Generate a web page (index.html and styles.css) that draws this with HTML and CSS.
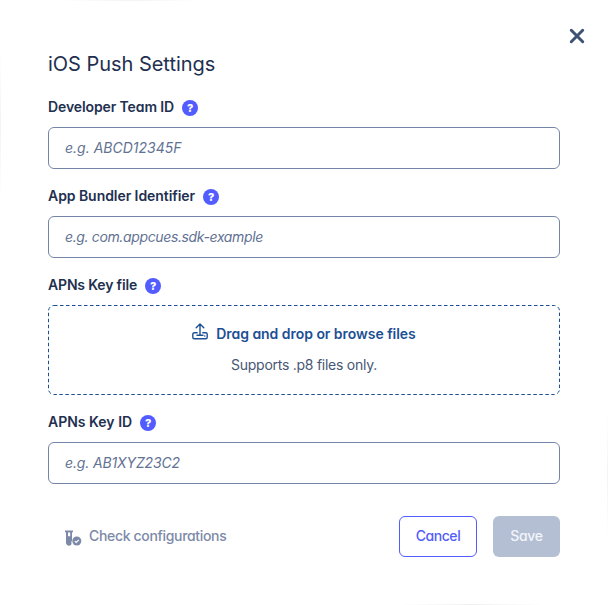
FILE: index.html
```
<!DOCTYPE html>
<html lang="en">
<head>
<meta charset="utf-8">
<title>iOS Push Settings</title>
<link rel="stylesheet" href="styles.css">
</head>
<body>
<main class="modal">
  <button class="close" aria-label="Close"><svg width="16" height="16" viewBox="0 0 16 16"><path d="M2.3 2.3 13.7 13.7M13.7 2.3 2.3 13.7" fill="none" stroke="#405274" stroke-width="3" stroke-linecap="round"/></svg></button>
  <h1>iOS Push Settings</h1>
  <section class="field">
    <div class="label"><label class="l-team" for="team">Developer Team ID</label><span class="help">?</span></div>
    <input id="team" placeholder="e.g. ABCD12345F">
  </section>
  <section class="field">
    <div class="label"><label class="l-bundle" for="bundle">App Bundler Identifier</label><span class="help">?</span></div>
    <input id="bundle" class="p-bundle" placeholder="e.g. com.appcues.sdk-example">
  </section>
  <section class="field">
    <div class="label"><label class="l-file">APNs Key file</label><span class="help">?</span></div>
    <div class="drop">
      <svg class="outline" width="512" height="90"><rect x=".5" y=".5" width="511" height="89" rx="5.5" fill="none" stroke="#1d4f94" stroke-dasharray="3.5 2.5"/></svg>
      <div class="browse">
        <svg width="16" height="17" viewBox="0 0 16 17"><path d="M8 12V1.2M4.2 4.8 8 1l3.8 3.8M5.2 9.8H2.3Q.8 9.8.8 11.3v2.9q0 1.5 1.5 1.5h11.4q1.5 0 1.5-1.5v-2.9q0-1.5-1.5-1.5h-2.9M5 12.2h6" fill="none" stroke="#1d4f94" stroke-width="1.4" stroke-linecap="round" stroke-linejoin="round"/><circle cx="12.8" cy="13" r=".8" fill="#1d4f94"/></svg>
        <span>Drag and drop or browse files</span>
      </div>
      <p>Supports .p8 files only.</p>
    </div>
  </section>
  <section class="field">
    <div class="label"><label for="key">APNs Key ID</label><span class="help">?</span></div>
    <input id="key" class="p-key" placeholder="e.g. AB1XYZ23C2">
  </section>
  <footer>
    <div class="check">
      <svg width="17" height="16" viewBox="0 0 17 16"><path d="M0 .5h8V2.2H7v8.3q-1 1.5-.4 3.5A3 3 0 0 1 1 12V2.2H0zM3 2.4v3.8h2.2V2.4z" fill="#7d89a8" fill-rule="evenodd"/><circle cx="11.8" cy="11" r="4.5" fill="#7d89a8"/><path d="m9.8 11.1 1.4 1.4 2.6-2.7" fill="none" stroke="#fff" stroke-width="1.2"/></svg>
      <span>Check configurations</span>
    </div>
    <button class="cancel">Cancel</button>
    <button class="save">Save</button>
  </footer>
</main>
</body>
</html>
```
FILE: styles.css
```
* { box-sizing: border-box; }
body {
  margin: 0;
  background:
    linear-gradient(90deg, transparent, #f3f3f3, transparent) 60px 0 / 140px 1px no-repeat,
    linear-gradient(90deg, transparent, #f0f0f0, transparent) 400px 604px / 145px 1px no-repeat,
    linear-gradient(transparent, #f3f3f3, transparent) 0 50px / 1px 150px no-repeat,
    linear-gradient(transparent, #f3f3f3, transparent) 607px 410px / 1px 130px no-repeat,
    #fff;
  color: #223050;
  font: 400 14px/20px Inter, "Open Sans", sans-serif;
  font-feature-settings: "cv11";
}
.modal { position: relative; width: 608px; height: 605px; padding: 48px 48px 0; }
button { font: inherit; font-feature-settings: inherit; margin: 0; }
.close { position: absolute; left: 568.5px; top: 28px; width: 16px; height: 16px; padding: 0; border: 0; background: none; }
.close svg { display: block; }
h1 { margin: 0 0 16px; font-size: 20px; line-height: 32px; font-weight: 400; letter-spacing: -.03px; }
.field { margin-bottom: 16px; }
.label { display: flex; align-items: center; gap: 8px; height: 22px; margin-bottom: 9px; font-weight: 600; }
.l-team { letter-spacing: -.11px; }
.l-bundle { letter-spacing: -.06px; }
.l-file { letter-spacing: -.17px; }
.help {
  width: 16px; height: 16px; margin-top: 1px; border-radius: 50%;
  background: #525cff; color: #fff;
  font-size: 11px; line-height: 16px; font-weight: 800; text-align: center;
}
input {
  display: block; width: 512px; height: 42px; padding: 0 16px 1px;
  border: 1px solid #7585a8; border-radius: 6px; background: #fff;
  font: inherit; font-feature-settings: inherit;
}
input::placeholder { color: #627293; font-style: italic; opacity: 1; }
.p-bundle { letter-spacing: -.37px; }
.p-key { letter-spacing: -.13px; }
.drop { position: relative; height: 90px; padding-top: 18px; text-align: center; }
.outline { position: absolute; inset: 0; }
.browse { display: flex; justify-content: center; gap: 8px; height: 22px; color: #1d4f94; font-weight: 600; letter-spacing: -.04px; line-height: 22px; }
.drop p { margin: 10px 0 0; color: #485775; letter-spacing: -.26px; }
footer { display: flex; align-items: center; height: 41px; margin-top: 32px; font-weight: 500; }
.check { display: flex; align-items: center; gap: 7px; margin: 0 auto 1px 17px; color: #7d89a8; letter-spacing: -.33px; }
.check svg { margin-top: 3px; }
footer button { height: 41px; padding: 0 0 2px; border-radius: 6px; font-weight: 500; }
.cancel { width: 78px; margin-right: 16px; border: 1px solid #525cff; background: #fff; color: #525cff; letter-spacing: -.45px; }
.save { width: 67px; border: 0; background: #b4bfd4; color: #f2f5fa; letter-spacing: -.3px; }
```
